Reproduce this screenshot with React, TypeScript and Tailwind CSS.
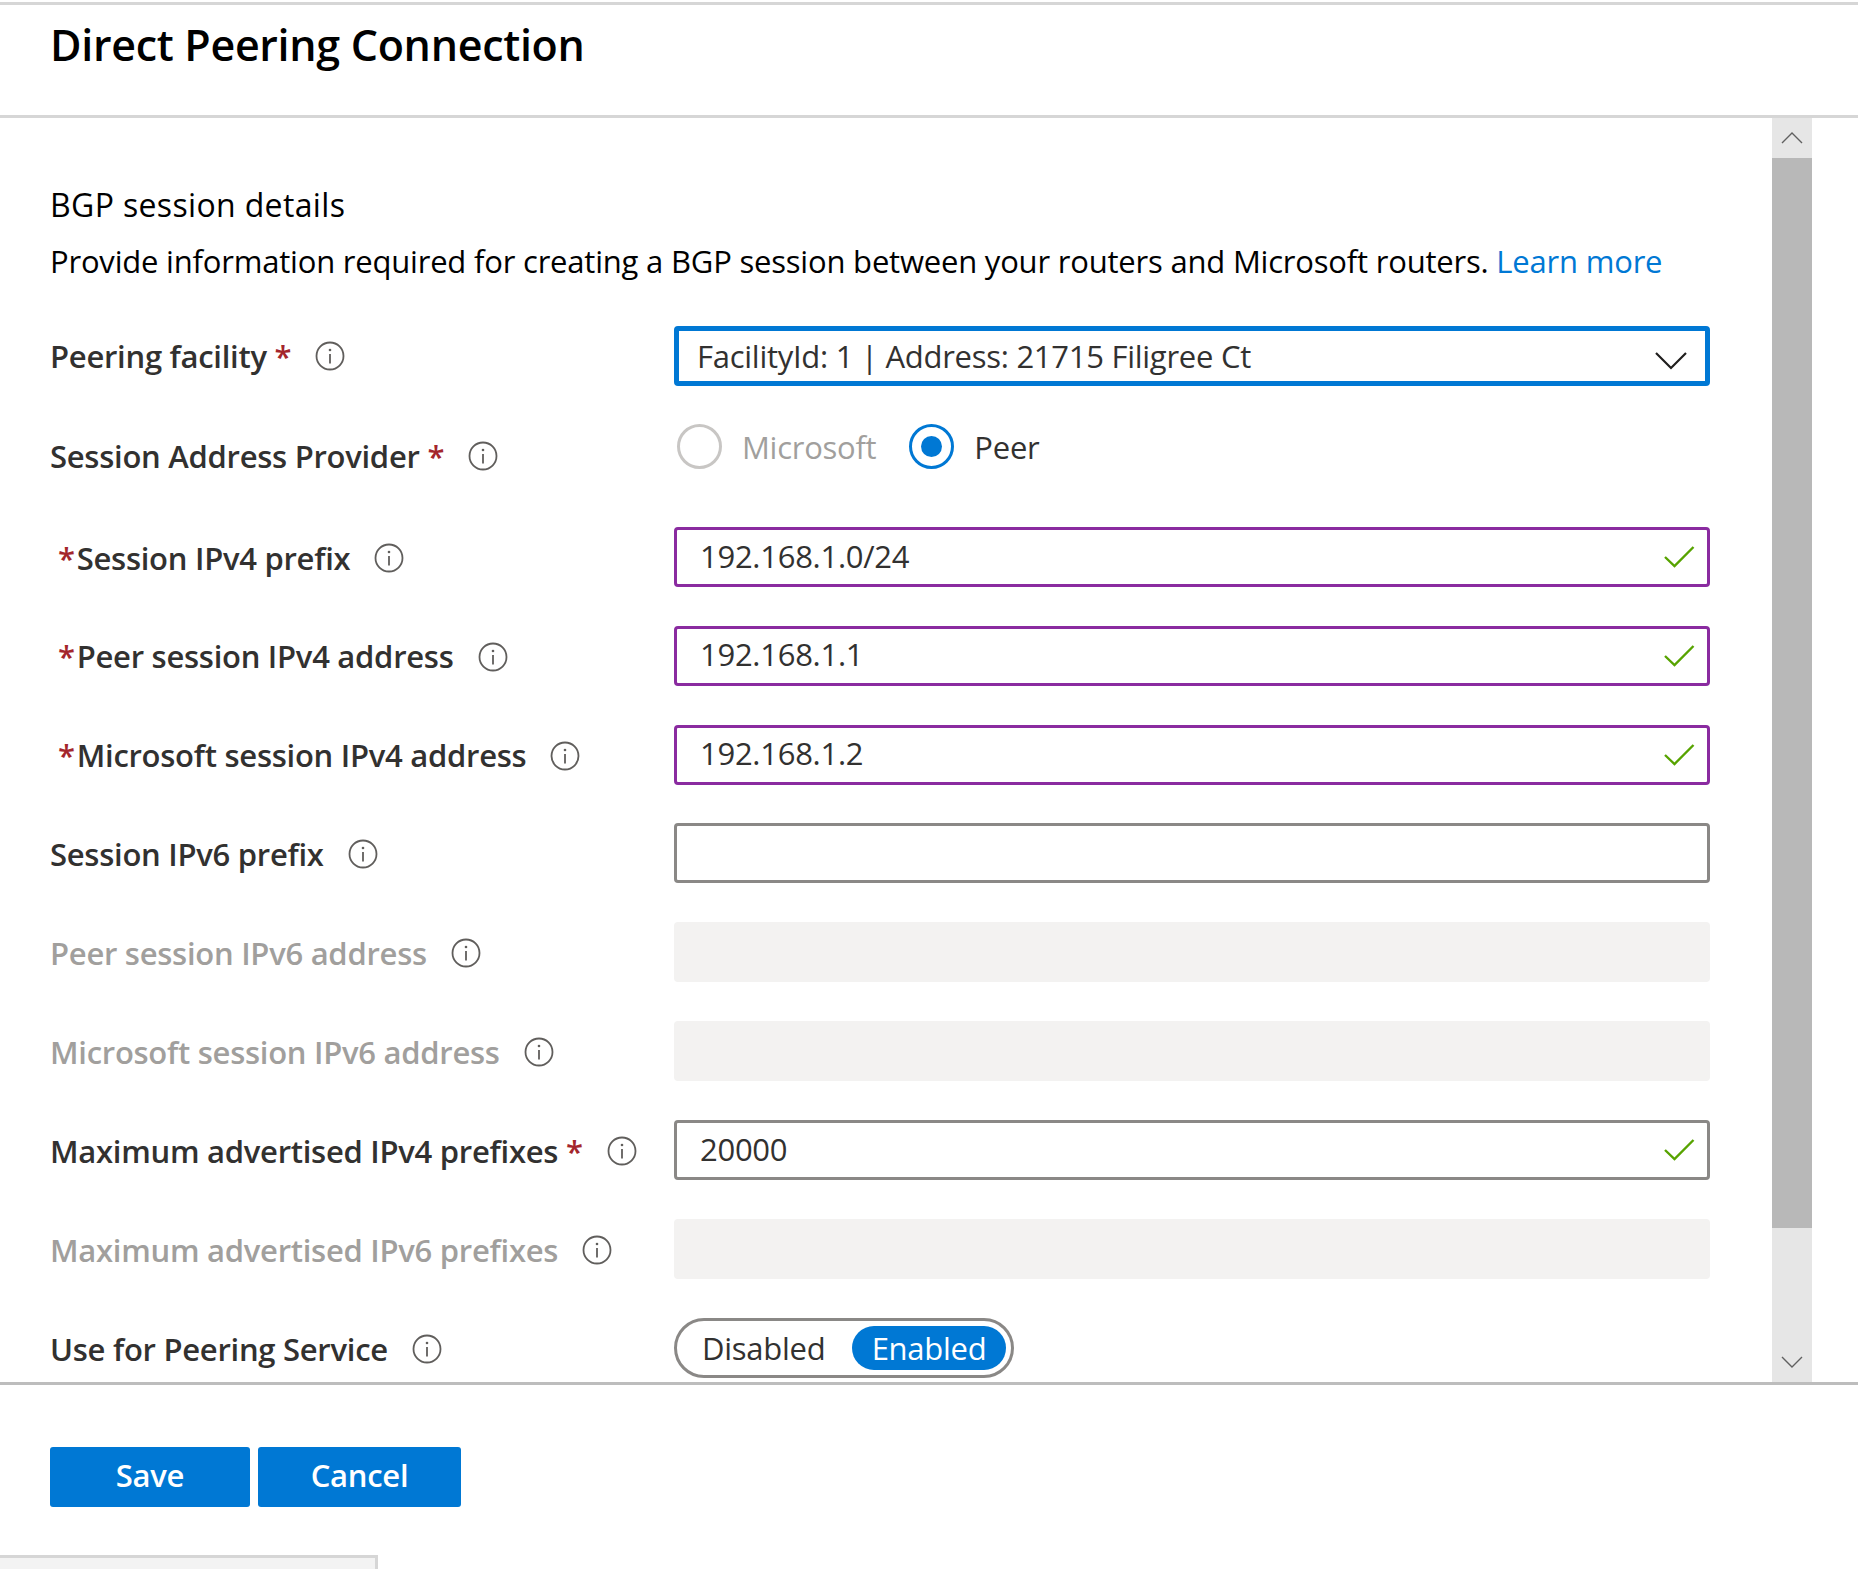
import { ReactNode } from 'react';

function InfoIcon() {
  return (
    <svg width="30" height="30" viewBox="0 0 30 30" fill="none" className="shrink-0">
      <circle cx="15" cy="15" r="13.5" stroke="#605e5c" strokeWidth="1.8" />
      <circle cx="15" cy="9" r="1.3" fill="#605e5c" />
      <path d="M15 13v9.5" stroke="#605e5c" strokeWidth="1.8" />
    </svg>
  );
}

function Check() {
  return (
    <svg width="32" height="24" viewBox="0 0 32 24" fill="none" className="shrink-0">
      <path d="M2 12l9.5 9L30.5 2" stroke="#57a300" strokeWidth="2.4" />
    </svg>
  );
}

function Star() {
  return <span className="text-[#a4262c]">*</span>;
}

function Row({ label, children, h = 'h-[60px] ', pad = 'pt-[2px]' }: { label: ReactNode; children?: ReactNode; h?: string; pad?: string }) {
  return (
    <div className={`flex items-center mb-[38.875px] ${h}`}>
      <div className={`w-[624px] shrink-0 flex items-center ${pad}`}>{label}</div>
      <div className="w-[1036px] shrink-0 h-full">{children}</div>
    </div>
  );
}

function Label({
  text,
  star,
  leadStar,
  disabled,
}: {
  text: string;
  star?: boolean;
  leadStar?: boolean;
  disabled?: boolean;
}) {
  return (
    <>
      <span className={`whitespace-nowrap font-semibold ${disabled ? 'text-[#a19f9d]' : 'text-[#323130]'} ${leadStar ? 'pl-2' : ''}`}>
        {leadStar && (
          <span className="pr-[2px]">
            <Star />
          </span>
        )}
        {text}
        {star && (
          <>
            {' '}
            <Star />
          </>
        )}
      </span>
      <span className="ml-6 flex">
        <InfoIcon />
      </span>
    </>
  );
}

function TextInput({ value, purple }: { value?: string; purple?: boolean }) {
  return (
    <div
      className={`h-full rounded-[4px] flex items-center justify-between pl-[23px] pr-[12px] text-[#323130] border-[3px] ${
        purple ? 'border-[#8a2ba0]' : 'border-[#8a8886]'
      }`}
    >
      <span className="-mt-[2px]">{value}</span>
      {value && <Check />}
    </div>
  );
}

function DisabledInput() {
  return <div className="h-full rounded-[4px] bg-[#f3f2f1]" />;
}

export default function App() {
  return (
    <div className="h-[1569px] w-[1858px] overflow-hidden bg-white flex flex-col font-['Open_Sans',sans-serif] text-[31px] tracking-[-0.27px]">
      {/* header */}
      <div className="mt-[2px] h-[116px] shrink-0 border-y-[3px] border-[#d6d6d6] pl-[50px] pt-[14px]">
        <h1 className="text-[43px] leading-[52px] font-semibold text-black tracking-[-0.3px]">Direct Peering Connection</h1>
      </div>

      {/* scrolling body */}
      <div className="h-[1267px] shrink-0 flex overflow-hidden border-b-[3px] border-[#bdbdbd]">
        <div className="w-[1772px] shrink-0 pl-[50px] pt-[64px]">
          <h2 className="h-[46px] leading-[46px] text-black text-[32px] tracking-[0.35px]">BGP session details</h2>
          <p className="h-[50px] leading-[67px] text-black whitespace-nowrap tracking-[-0.2px]">
            Provide information required for creating a BGP session between your routers and Microsoft routers.{' '}
            <a className="text-[#0078d4]">Learn more</a>
          </p>
          <div className="h-[48px]" />

          <Row pad="pt-0" label={<Label text="Peering facility" star />}>
            <div className="h-full rounded-[4px] border-[5px] border-[#0078d4] flex items-center justify-between pl-[18px] pr-[18px] text-[#323130]">
              <span>FacilityId: 1 | Address: 21715 Filigree Ct</span>
              <svg width="32" height="20" viewBox="0 0 32 20" fill="none" className="mt-[10px]">
                <path d="M1 2l15 15L31 2" stroke="#201f1e" strokeWidth="2.2" />
              </svg>
            </div>
          </Row>

          <Row h="h-[63px]" pad="pt-0" label={<Label text="Session Address Provider" star />}>
            <div className="flex items-center gap-[24px] pl-[3px] h-[44px]">
              <div className="flex items-center gap-[20px]">
                <span className="w-[45px] h-[45px] rounded-full border-[3px] border-[#c8c6c4]" />
                <span className="text-[#a19f9d]">Microsoft</span>
              </div>
              <div className="flex items-center gap-[20px] ml-[9px]">
                <span className="w-[45px] h-[45px] rounded-full border-[3px] border-[#0078d4] flex items-center justify-center">
                  <span className="w-[21px] h-[21px] rounded-full bg-[#0078d4]" />
                </span>
                <span className="text-[#323130]">Peer</span>
              </div>
            </div>
          </Row>

          <Row label={<Label text="Session IPv4 prefix" leadStar />}>
            <TextInput value="192.168.1.0/24" purple />
          </Row>
          <Row label={<Label text="Peer session IPv4 address" leadStar />}>
            <TextInput value="192.168.1.1" purple />
          </Row>
          <Row label={<Label text="Microsoft session IPv4 address" leadStar />}>
            <TextInput value="192.168.1.2" purple />
          </Row>
          <Row label={<Label text="Session IPv6 prefix" />}>
            <TextInput />
          </Row>
          <Row label={<Label text="Peer session IPv6 address" disabled />}>
            <DisabledInput />
          </Row>
          <Row label={<Label text="Microsoft session IPv6 address" disabled />}>
            <DisabledInput />
          </Row>
          <Row label={<Label text="Maximum advertised IPv4 prefixes" star />}>
            <TextInput value="20000" />
          </Row>
          <Row label={<Label text="Maximum advertised IPv6 prefixes" disabled />}>
            <DisabledInput />
          </Row>
          <Row label={<Label text="Use for Peering Service" />}>
            <div className="w-[340px] h-full rounded-full border-[3px] border-[#8a8886] flex items-center justify-between pl-[25px] pr-[5px]">
              <span className="text-[#323130]">Disabled</span>
              <span className="w-[154px] h-[44px] rounded-full bg-[#0078d4] text-white flex items-center justify-center">Enabled</span>
            </div>
          </Row>
        </div>

        {/* scrollbar */}
        <div className="w-[40px] shrink-0 bg-[#e6e6e6] flex flex-col justify-between">
          <div className="flex flex-col">
            <div className="h-[40px] flex items-center justify-center">
              <svg width="22" height="14" viewBox="0 0 22 14" fill="none">
                <path d="M1 12L11 2l10 10" stroke="#606060" strokeWidth="1.4" />
              </svg>
            </div>
            <div className="h-[1070px] bg-[#b8b8b8]" />
          </div>
          <div className="h-[40px] flex items-center justify-center">
            <svg width="22" height="14" viewBox="0 0 22 14" fill="none">
              <path d="M1 2l10 10L21 2" stroke="#606060" strokeWidth="1.4" />
            </svg>
          </div>
        </div>
      </div>

      {/* footer */}
      <div className="flex gap-2 pl-[50px] pt-[62px] shrink-0">
        <button className="w-[200px] h-[60px] pb-[3px] rounded-[3px] bg-[#0078d4] text-white font-semibold">Save</button>
        <button className="w-[203px] h-[60px] pb-[3px] rounded-[3px] bg-[#0078d4] text-white font-semibold">Cancel</button>
      </div>
      <div className="mt-[48px] w-[378px] flex-1 border-t-[3px] border-r-[3px] border-[#d6d6d6] bg-[#f3f3f3]" />
    </div>
  );
}
